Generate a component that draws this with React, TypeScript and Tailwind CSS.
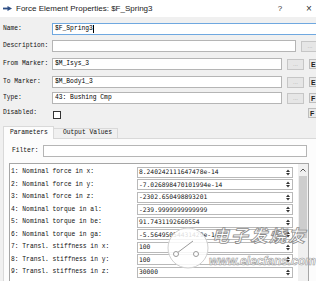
import React from "react";

function Label({ children, w = "w-[49px]" }: { children: React.ReactNode; w?: string }) {
  return (
    <div className={`${w} shrink-0 font-['Liberation_Mono',monospace] text-[6.3px] leading-none whitespace-pre text-[#111]`}>
      {children}
    </div>
  );
}

function DotsBtn({ w = "w-[17px]" }: { w?: string }) {
  return (
    <div className={`${w} h-[11px] shrink-0 border border-[#c6c6c6] bg-[#e6e6e6] flex items-center justify-center font-['Liberation_Sans',sans-serif] text-[6px] leading-none text-[#a8a8a8]`}>
      ...
    </div>
  );
}

function IconBtn({ glyph }: { glyph: string }) {
  return (
    <div className="w-[9px] h-[10px] shrink-0 border border-[#bdbdbd] bg-[#e9e9e9] flex items-center justify-start pl-[1px] font-['Liberation_Sans',sans-serif] font-bold text-[7px] leading-none text-[#222]">
      {glyph}
    </div>
  );
}

function Spinner() {
  return (
    <svg width="4" height="7" viewBox="0 0 4 7" className="shrink-0">
      <path d="M0 3 L2 0.5 L4 3 Z" fill="#333" />
      <path d="M0 4 L2 6.5 L4 4 Z" fill="#333" />
    </svg>
  );
}

const rows: [string, string][] = [
  ["1: Nominal force in x:", "8.240242111647478e-14"],
  ["2: Nominal force in y:", "-7.026898470101994e-14"],
  ["3: Nominal force in z:", "-2302.650498893201"],
  ["4: Nominal torque in al:", "-239.9999999999999"],
  ["5: Nominal torque in be:", "91.7431192660554"],
  ["6: Nominal torque in ga:", "-5.56495054431429e-14"],
  ["7: Transl. stiffness in x:", "100"],
  ["8: Transl. stiffness in y:", "100"],
  ["9: Transl. stiffness in z:", "30000"],
];

export default function App() {
  return (
    <div className="relative w-[316px] h-[281px] overflow-hidden bg-[#f0f0f0] text-black">
      {/* Title bar */}
      <div className="h-[17px] bg-white flex items-center pl-[3px]">
        <svg width="9" height="5" viewBox="0 0 9 5" className="shrink-0 mr-[4px]">
          <rect x="0" y="1.6" width="5" height="1.8" fill="#2e4f85" />
          <path d="M4.5 0 L9 2.5 L4.5 5 Z" fill="#2e4f85" />
        </svg>
        <span className="font-['Liberation_Sans',sans-serif] text-[8px] leading-none text-[#1a1a1a] whitespace-nowrap">
          Force Element Properties: $F_Spring3
        </span>
        <div className="ml-auto flex items-center pr-[2px]">
          <span className="w-[10px] text-center font-['Liberation_Sans',sans-serif] text-[8px] leading-none text-[#333]">?</span>
          <span className="w-[19px]" />
          <span className="w-[10px] text-center font-['Liberation_Sans',sans-serif] text-[10px] leading-none text-[#333]">×</span>
        </div>
      </div>

      {/* Form */}
      <div className="pl-[3px]">
        <div className="mt-[6px] flex h-[12px] items-center">
          <Label>Name:</Label>
          <div className="h-[12px] w-[272px] shrink-0 border border-[#6fa8e0] bg-white flex items-center pl-[2px]">
            <span className="font-['Liberation_Mono',monospace] text-[6.3px] leading-none whitespace-pre">$F_Spring3</span>
            <span className="w-px h-[8px] bg-black ml-[0.5px]" />
          </div>
        </div>

        <div className="mt-[5px] flex h-[12px] items-center">
          <Label>Description:</Label>
          <div className="h-[12px] w-[244px] shrink-0 border border-[#b5b5b5] bg-white" />
          <div className="ml-[5px]">
            <DotsBtn w="w-[18px]" />
          </div>
        </div>

        <div className="mt-[6px] flex h-[12px] items-center">
          <Label>From Marker:</Label>
          <div className="h-[12px] w-[230px] shrink-0 border border-[#b5b5b5] bg-white flex items-center pl-[2px]">
            <span className="font-['Liberation_Mono',monospace] text-[6.3px] leading-none whitespace-pre">$M_Isys_3</span>
          </div>
          <div className="ml-[5px]"><DotsBtn /></div>
          <div className="ml-[5px]"><IconBtn glyph="E" /></div>
        </div>

        <div className="mt-[6px] flex h-[12px] items-center">
          <Label>To Marker:</Label>
          <div className="h-[12px] w-[230px] shrink-0 border border-[#b5b5b5] bg-white flex items-center pl-[2px]">
            <span className="font-['Liberation_Mono',monospace] text-[6.3px] leading-none whitespace-pre">$M_Body1_3</span>
          </div>
          <div className="ml-[5px]"><DotsBtn /></div>
          <div className="ml-[5px]"><IconBtn glyph="E" /></div>
        </div>

        <div className="mt-[4px] flex h-[12px] items-center">
          <Label>Type:</Label>
          <div className="h-[12px] w-[230px] shrink-0 border border-[#b5b5b5] bg-white flex items-center pl-[2px]">
            <span className="font-['Liberation_Mono',monospace] text-[6.3px] leading-none whitespace-pre">43: Bushing Cmp</span>
          </div>
          <div className="ml-[5px]"><DotsBtn /></div>
          <div className="ml-[5px]"><IconBtn glyph="F" /></div>
        </div>

        <div className="mt-[4px] flex h-[10px] items-center">
          <Label>Disabled:</Label>
          <div className="ml-[1px] w-[8px] h-[8px] shrink-0 border border-[#333] bg-white mt-[3px]" />
          <div className="ml-[247px]"><IconBtn glyph="F" /></div>
        </div>

        {/* Tabs */}
        <div className="mt-[8px] flex items-end h-[12px]">
          <div className="relative z-10 -mb-px h-[13px] w-[51px] shrink-0 border border-b-0 border-[#d9d9d9] bg-[#fcfcfc] flex items-center pl-[6px]">
            <Label w="w-auto">Parameters</Label>
          </div>
          <div className="h-[10px] w-[64px] shrink-0 border border-l-0 border-b-0 border-[#d9d9d9] bg-[#f0f0f0] flex items-center pl-[9px]">
            <Label w="w-auto">Output Values</Label>
          </div>
        </div>
        <div className="w-[320px] h-[200px] border border-[#d9d9d9] bg-[#fcfcfc] pl-[5px]">
          <div className="mt-[6px] flex h-[12px] items-center pl-[3px]">
            <Label w="w-[31px]">Filter:</Label>
            <div className="h-[12px] w-[264px] shrink-0 border border-[#b5b5b5] bg-white" />
          </div>

          <div className="mt-[6px] w-[300px] h-[130px] border border-[#a6a6a6] bg-white flex">
            <div className="pt-[2px] flex flex-col">
              {rows.map(([l, v]) => (
                <div key={l} className="h-[12.5px] flex items-center shrink-0">
                  <div className="w-[127px] shrink-0 pl-[1px]">
                    <Label w="w-auto">{l}</Label>
                  </div>
                  <div className="w-[156px] h-[11px] shrink-0 border border-[#b9b9b9] bg-white flex items-center pl-[1px] pr-[2px]">
                    <span className="font-['DejaVu_Sans_Mono',monospace] text-[6.3px] leading-none whitespace-pre text-[#111]">{v}</span>
                    <span className="ml-auto"><Spinner /></span>
                  </div>
                </div>
              ))}
            </div>
            <div className="ml-[5px] w-[10px] shrink-0 bg-[#f0f0f0] flex flex-col items-center">
              <div className="h-[12px] flex items-center justify-center">
                <svg width="6" height="4" viewBox="0 0 6 4">
                  <path d="M0.5 3.5 L3 1 L5.5 3.5" fill="none" stroke="#555" strokeWidth="1" />
                </svg>
              </div>
              <div className="w-[8px] h-[62px] bg-[#cdcdcd]" />
            </div>
          </div>
        </div>
      </div>

      {/* Watermark */}
      <div className="absolute left-[166px] top-[226px] pointer-events-none">
        <svg width="44" height="44" viewBox="0 0 44 44">
          <circle cx="22" cy="22" r="20" fill="rgba(255,255,255,0.85)" stroke="#cfcfcf" strokeWidth="1" />
          <line x1="11" y1="27" x2="27" y2="15" stroke="#9a9a9a" strokeWidth="1" />
          <circle cx="10" cy="28" r="2.5" fill="white" stroke="#9a9a9a" strokeWidth="1" />
          <circle cx="30" cy="28" r="2.5" fill="white" stroke="#9a9a9a" strokeWidth="1" />
        </svg>
      </div>
      <div className="absolute left-[212px] top-[226px] pointer-events-none font-['Noto_Sans_CJK_SC',sans-serif] font-bold italic text-[17px] leading-none tracking-[2px] text-white/90 [-webkit-text-stroke:0.8px_#8a8a8a]">
        电子发烧友
      </div>
      <div className="absolute left-[209px] top-[255px] pointer-events-none font-['Liberation_Sans',sans-serif] font-bold italic text-[12px] leading-none text-white/80 [-webkit-text-stroke:0.6px_#9a9a9a]">
        www.elecfans.com
      </div>
    </div>
  );
}
